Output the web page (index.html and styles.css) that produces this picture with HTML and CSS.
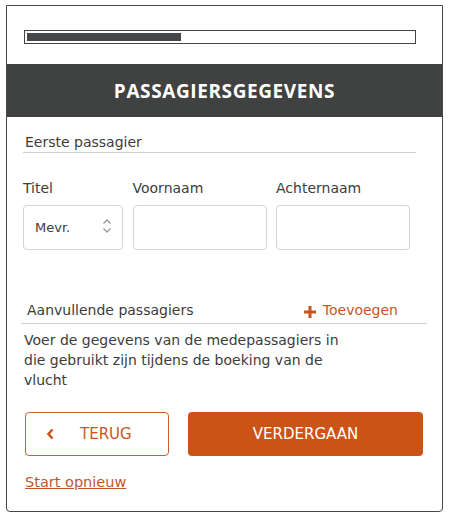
FILE: index.html
```html
<!DOCTYPE html>
<html lang="nl">
<head>
<meta charset="utf-8">
<title>Passagiersgegevens</title>
<link rel="stylesheet" href="styles.css">
</head>
<body>
<div class="card">
  <div class="progress"><div class="progress-fill" style="width:154px"></div></div>
  <h1 class="header">PASSAGIERSGEGEVENS</h1>
  <div class="content">
    <div class="section-title">Eerste passagier</div>
    <div class="fields">
      <div class="field">
        <label class="label">Titel</label>
        <div class="box select">
          <span>Mevr.</span>
          <svg class="updown" width="10" height="16" viewBox="0 0 10 16"><path d="M1.5 5.5 L5 2 L8.5 5.5 M1.5 10.5 L5 14 L8.5 10.5" fill="none" stroke="#9a9a9a" stroke-width="1.3"/></svg>
        </div>
      </div>
      <div class="field">
        <label class="label">Voornaam</label>
        <div class="box"></div>
      </div>
      <div class="field">
        <label class="label">Achternaam</label>
        <div class="box"></div>
      </div>
    </div>
    <div class="extra-row">
      <span class="extra-title">Aanvullende passagiers</span>
      <span class="add"><svg width="14" height="14" viewBox="0 0 14 14"><path d="M7 1 V13 M1 7 H13" stroke="#c9561f" stroke-width="3"/></svg>Toevoegen</span>
    </div>
    <p class="desc">Voer de gegevens van de medepassagiers in die gebruikt zijn tijdens de boeking van de vlucht</p>
    <div class="buttons">
      <button class="btn-back"><svg width="8" height="12" viewBox="0 0 8 12"><path d="M6.5 1.5 L2.5 6 L6.5 10.5" fill="none" stroke="#c9561f" stroke-width="2.6"/></svg><span>TERUG</span></button>
      <button class="btn-next">VERDERGAAN</button>
    </div>
    <a class="restart" href="#">Start opnieuw</a>
  </div>
</div>
</body>
</html>
```
FILE: styles.css
```css
* { box-sizing: border-box; }
body {
  margin: 0;
  background: #fff;
  font-family: "DejaVu Sans", "Liberation Sans", sans-serif;
  color: #3c3c3c;
}
.card {
  margin: 5px 0 0 6px;
  width: 437px;
  height: 507px;
  border: 1px solid #474747;
  border-radius: 0 0 4px 4px;
  padding-top: 24px;
}
.progress {
  margin-left: 17px;
  width: 392px;
  height: 14px;
  border: 1px solid #444;
  padding: 2px;
}
.progress-fill {
  height: 8px;
  background: #454647;
}
.header {
  margin: 20px 0 0;
  height: 53px;
  background: #404141;
  color: #fff;
  font-family: "Open Sans", "Liberation Sans", sans-serif;
  font-size: 19px;
  font-weight: 700;
  letter-spacing: 0.6px;
  display: flex;
  align-items: center;
  justify-content: center;
}
.content {
  padding: 0 0 0 16px;
}
.section-title {
  margin-top: 16px;
  width: 393px;
  font-size: 14px;
  line-height: 19px;
  padding: 0 0 0 2px;
  border-bottom: 1px solid #cfcfcf;
}
.fields {
  display: grid;
  grid-template-columns: 100px 134px 134px;
  column-gap: 9.5px;
  margin-top: 25px;
}
.label {
  display: block;
  font-size: 14px;
  line-height: 20px;
  margin-bottom: 7px;
}
.box {
  height: 45px;
  border: 1px solid #d3d3d3;
  border-radius: 4px;
}
.select {
  display: flex;
  align-items: center;
  justify-content: space-between;
  padding: 0 10px 0 11px;
  font-size: 13px;
}
.updown { margin-top: -3px; }
.extra-row {
  margin: 50px 0 0 -2px;
  width: 406px;
  display: flex;
  justify-content: space-between;
  align-items: flex-end;
  border-bottom: 1px solid #cfcfcf;
  padding: 0 29px 3px 6px;
  font-size: 14px;
  line-height: 20px;
}
.add {
  color: #c9561f;
  display: flex;
  align-items: center;
  gap: 6px;
  margin-top: -6px;
}
.add svg { margin-top: 3px; }
.desc {
  margin: 6px 0 0 1px;
  width: 330px;
  font-size: 14px;
  line-height: 20px;
}
.buttons {
  display: flex;
  gap: 19px;
  margin: 22px 0 0 2px;
}
.btn-back {
  width: 144px;
  height: 44px;
  border: 1px solid #c9602f;
  border-radius: 4px;
  background: #fff;
  color: #c9561f;
  font-family: inherit;
  font-size: 15px;
  display: flex;
  align-items: center;
  padding: 0 0 0 20px;
  gap: 0;
}
.btn-back span { margin-left: 26px; }
.btn-next {
  width: 235px;
  height: 44px;
  border: none;
  border-radius: 4px;
  background: #cc5316;
  color: #fff;
  font-family: inherit;
  font-size: 15px;
}
.restart {
  display: inline-block;
  margin: 18px 0 0 2px;
  color: #c0582b;
  font-size: 14.5px;
  text-decoration: underline;
}
```
